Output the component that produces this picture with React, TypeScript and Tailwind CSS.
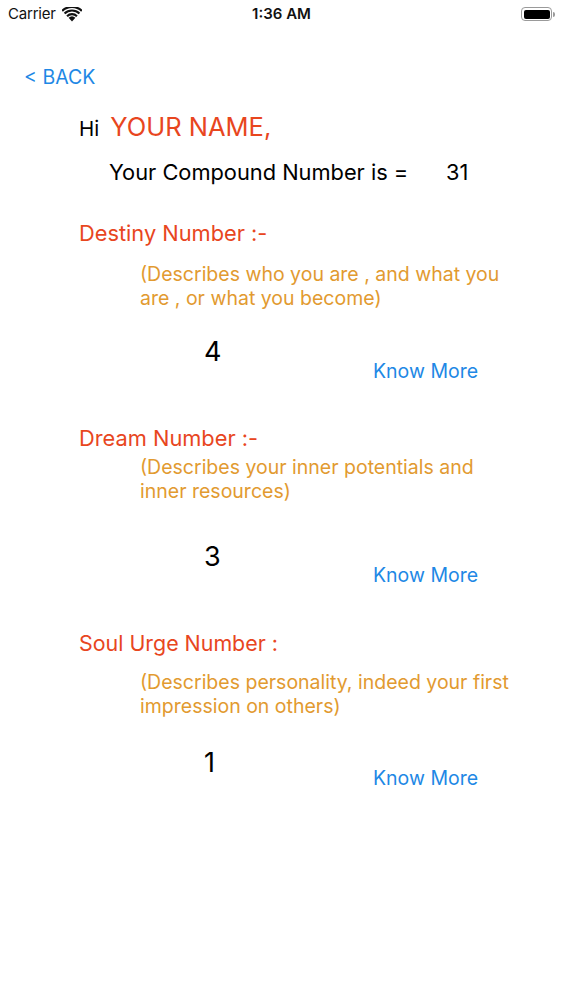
const font = { fontFamily: 'Inter, "Noto Sans", sans-serif' }

function Wifi() {
  return (
    <svg width="20" height="15" viewBox="0 0 20 15" className="ml-[6px]">
      <path d="M10 14.5 L6.6 10.8 A5 5 0 0 1 13.4 10.8 Z" fill="#111" />
      <path d="M4.3 8.4 A8.2 8.2 0 0 1 15.7 8.4 L14.2 10 A6 6 0 0 0 5.8 10 Z" fill="#111" />
      <path d="M1.8 5.7 A11.8 11.8 0 0 1 18.2 5.7 L16.7 7.3 A9.6 9.6 0 0 0 3.3 7.3 Z" fill="#111" />
      <path d="M-0.6 3.1 A15.3 15.3 0 0 1 20.6 3.1 L19.1 4.7 A13.1 13.1 0 0 0 0.9 4.7 Z" fill="#111" />
    </svg>
  )
}

function Battery() {
  return (
    <div className="flex items-center">
      <div className="w-[31px] h-[14px] rounded-[4px] border border-[#9a9a9a] p-[1.5px]">
        <div className="w-full h-full rounded-[2px] bg-black" />
      </div>
      <div className="w-[2px] h-[5px] rounded-r-sm bg-[#9a9a9a] ml-[1px]" />
    </div>
  )
}

function KnowRow({ value, gap, top }: { value: string; gap: string; top: string }) {
  return (
    <div className={`flex items-start pl-[204px] ${top}`}>
      <span className="w-[169px] text-[27px] leading-[32px] text-black">{value}</span>
      <span className={`text-[19.5px] leading-[24px] text-[#1e88e5] ${gap}`}>Know More</span>
    </div>
  )
}

export default function App() {
  return (
    <div className="w-[563px] h-[1000px] bg-white overflow-hidden" style={font}>
      <div className="h-[28px] flex items-center justify-between px-2 relative">
        <div className="flex items-center">
          <span className="text-[15px] text-[#111] tracking-[-0.2px]">Carrier</span>
          <Wifi />
        </div>
        <span className="absolute left-1/2 -translate-x-1/2 text-[15px] font-semibold text-[#111]">1:36 AM</span>
        <Battery />
      </div>

      <div className="mt-[37px] pl-[24px] text-[19.5px] leading-[24px] text-[#1e88e5]">&lt; BACK</div>

      <div className="mt-[23px] pl-[79px] flex items-baseline leading-[30px]">
        <span className="text-[20.5px] text-black">Hi</span>
        <span className="ml-[11px] text-[25.5px] text-[#e8461e]">YOUR NAME,</span>
      </div>

      <div className="mt-[15px] pl-[109px] flex leading-[26px] text-[21.8px] text-black">
        <span className="w-[337px]">Your Compound Number is =</span>
        <span>31</span>
      </div>

      <div className="mt-[35px] pl-[79px] text-[21.8px] leading-[26px] text-[#e8461e]">Destiny Number :-</div>
      <p className="mt-[16px] ml-[140px] w-[380px] text-[19.5px] leading-[24px] text-[#e29a30]">
        (Describes who you are , and what you are , or what you become)
      </p>
      <KnowRow value="4" gap="mt-[23px]" top="mt-[26px]" />

      <div className="mt-[42px] pl-[79px] text-[21.8px] leading-[26px] text-[#e8461e]">Dream Number :-</div>
      <p className="mt-[4px] ml-[140px] w-[380px] text-[19.5px] leading-[24px] text-[#e29a30]">
        (Describes your inner potentials and inner resources)
      </p>
      <KnowRow value="3" gap="mt-[22px]" top="mt-[38px]" />

      <div className="mt-[43px] pl-[79px] text-[21.4px] leading-[26px] text-[#e8461e]">Soul Urge Number :</div>
      <p className="mt-[14px] ml-[140px] w-[380px] text-[19.5px] leading-[24px] text-[#e29a30]">
        (Describes personality, indeed your first impression on others)
      </p>
      <KnowRow value="1" gap="mt-[19px]" top="mt-[29px]" />
    </div>
  )
}
